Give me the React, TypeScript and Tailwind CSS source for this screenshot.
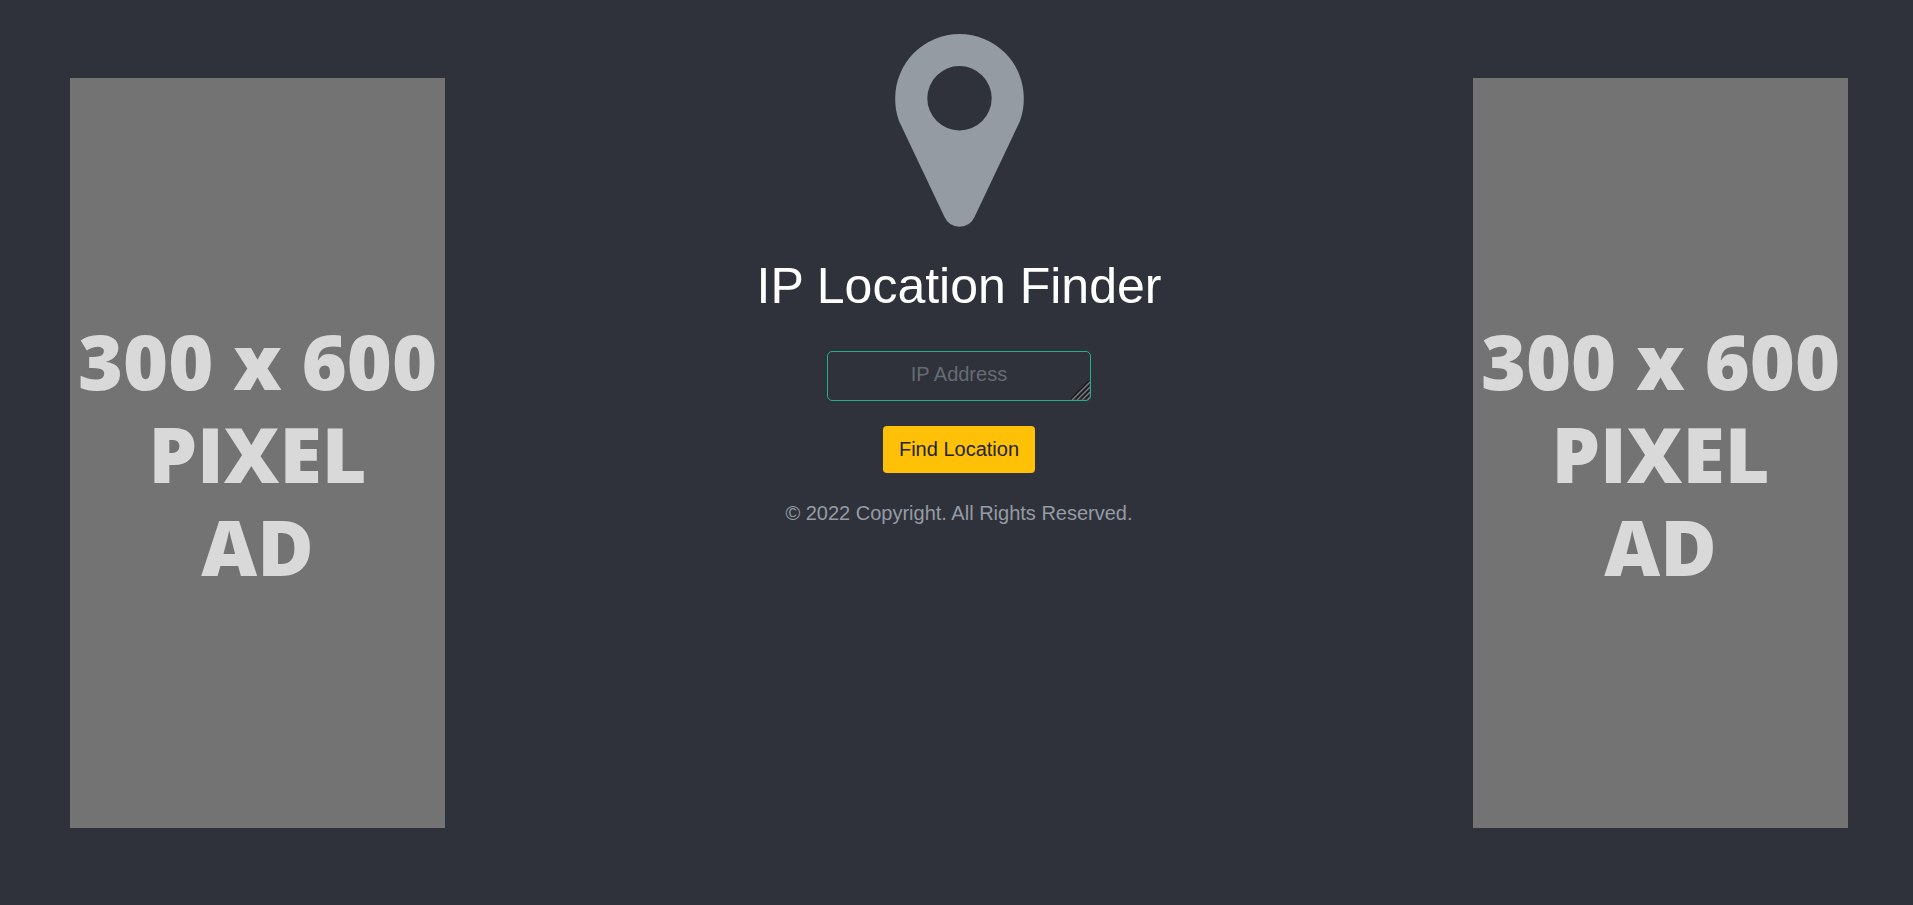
import { useState } from "react";
import type { FormEvent } from "react";

function MapPin() {
  return (
    <svg className="w-[130px] h-[193px]" viewBox="0 0 130 193" fill="#959ba3" aria-hidden="true">
      <path
        fillRule="evenodd"
        d="M65.5 0A64.3 64.3 0 0 1 129.800 64.3C129.800 72 128.900 79 126 87L80.500 183A16.500 16.500 0 0 1 50.500 183L5 87C2.100 79 1.200 72 1.200 64.300A64.300 64.300 0 0 1 65.500 0ZM65.500 32.100A32.200 32.200 0 1 0 65.500 96.500A32.200 32.200 0 1 0 65.500 32.100Z"
      />
    </svg>
  );
}

function ResizeGrip() {
  return (
    <svg
      className="pointer-events-none absolute right-px bottom-px w-[19px] h-[19px]"
      viewBox="0 0 19 19"
      fill="none"
      aria-hidden="true"
    >
      <path d="M0 18L18 0M5 18L18 5M10 18L18 10M15 18L18 15" stroke="#17191d" strokeWidth="1.5" />
      <path d="M1 19L19 1M6 19L19 6M11 19L19 11M16 19L19 16" stroke="#77797d" strokeWidth="1.3" />
    </svg>
  );
}

function AdBanner() {
  return (
    <aside className="mt-[78px] flex h-[750px] w-[375px] shrink-0 items-center justify-center bg-[#737373] text-center font-['Open_Sans',sans-serif] text-[77px] leading-[93px] font-extrabold text-[#d9d9d9]">
      <p className="whitespace-nowrap">
        300 x 600
        <br />
        PIXEL
        <br />
        AD
      </p>
    </aside>
  );
}

export default function App() {
  const [address, setAddress] = useState("");

  const handleSubmit = (e: FormEvent) => {
    e.preventDefault();
  };

  return (
    <div className="flex min-h-screen items-start justify-between bg-[#2f323b] pr-[65px] pl-[70px] font-['Liberation_Sans',Arial,sans-serif] text-xl leading-[30px]">
      <AdBanner />
      <main className="flex flex-col items-center pt-[34px]">
        <MapPin />
        <h1 className="mt-[29px] text-[50px] leading-[60px] text-white">IP Location Finder</h1>
        <form onSubmit={handleSubmit} className="mt-[35px] flex flex-col items-center">
          <div className="relative">
            <textarea
              aria-label="IP Address"
              placeholder="IP Address"
              rows={1}
              value={address}
              onChange={(e) => setAddress(e.target.value)}
              className="block h-[50px] w-[264px] resize-none overflow-hidden rounded-[5px] border border-[#20b08e] bg-transparent px-4 py-[7px] text-center leading-[30px] text-white placeholder:text-[#666b74] focus:outline-none"
            />
            <ResizeGrip />
          </div>
          <button
            type="submit"
            className="mt-[25px] cursor-pointer rounded-[4px] bg-[#ffc107] px-4 pt-2 pb-[9px] text-[#212529]"
          >
            Find Location
          </button>
        </form>
        <p className="mt-[25px] text-[#959ba3]">© 2022 Copyright. All Rights Reserved.</p>
      </main>
      <AdBanner />
    </div>
  );
}
